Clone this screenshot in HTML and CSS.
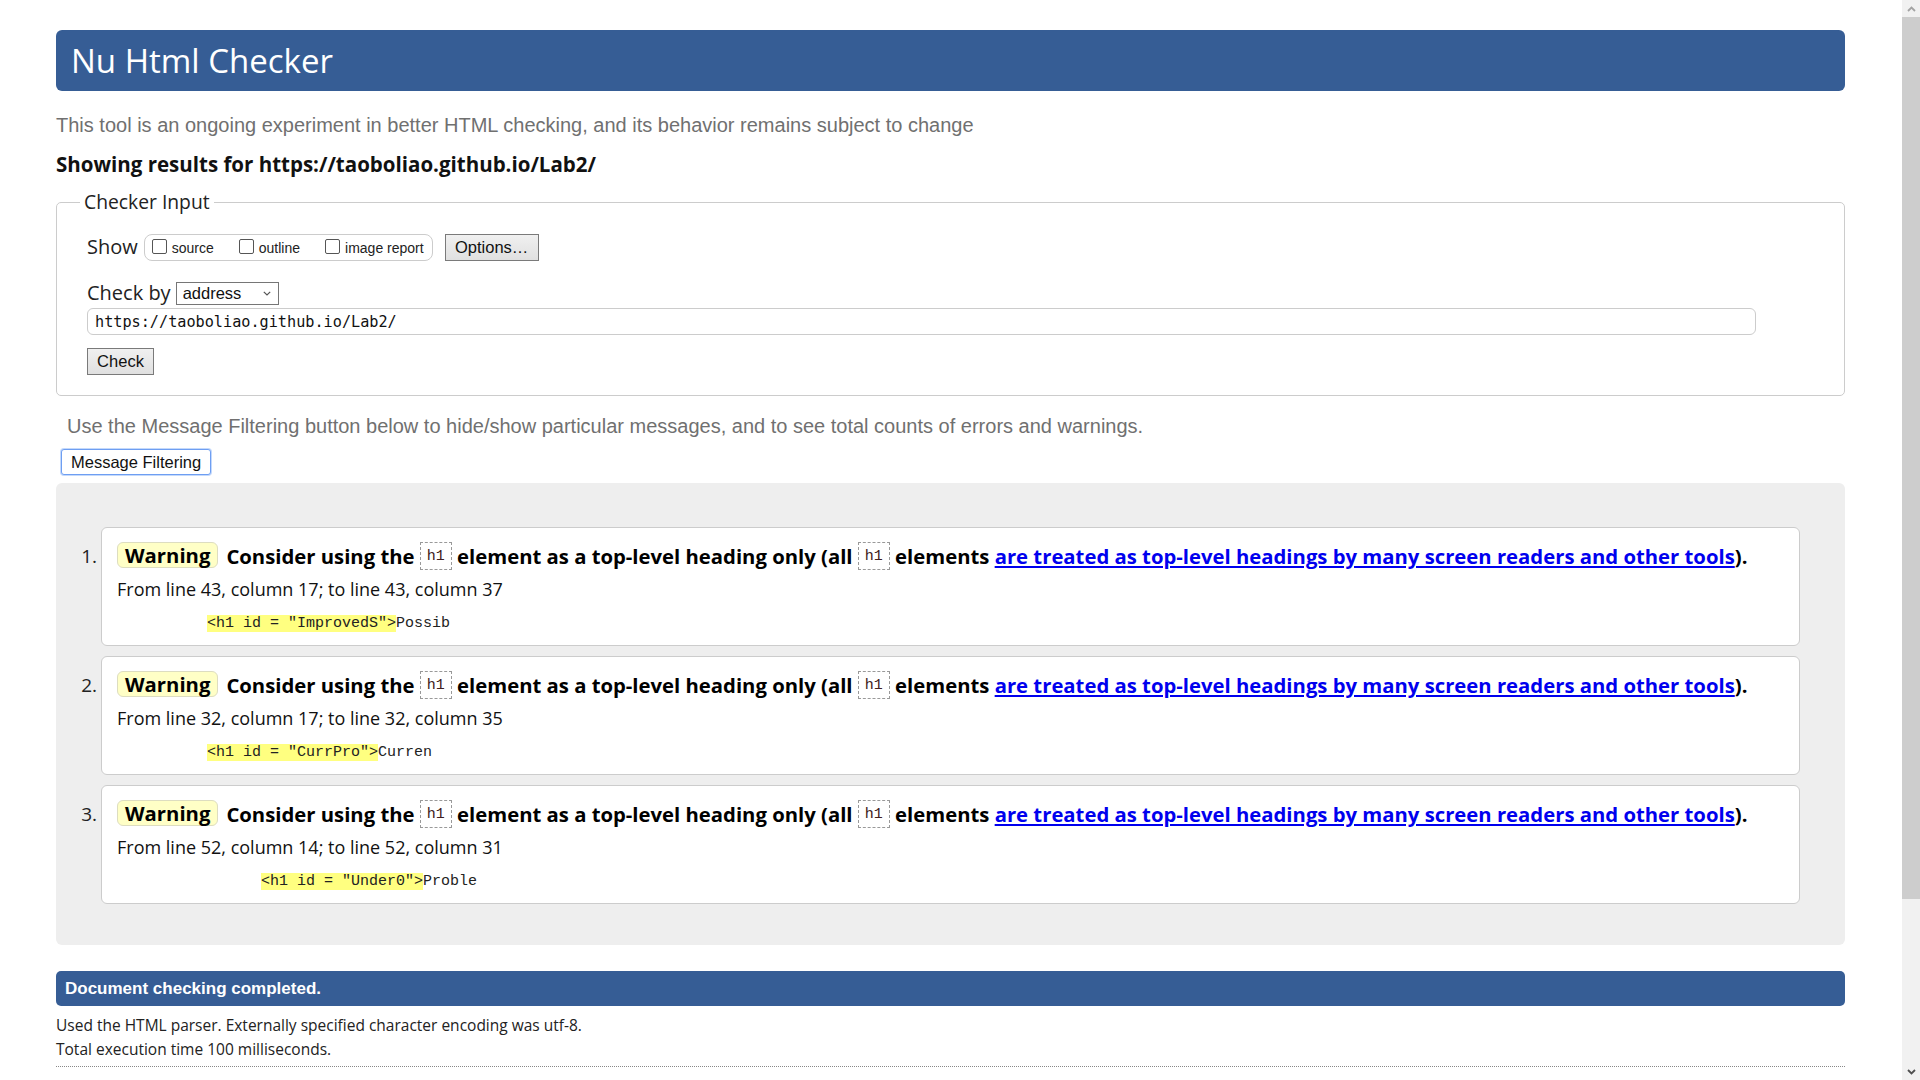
FILE: index.html
```html
<!DOCTYPE html>
<html lang="en">
<head>
<meta charset="utf-8">
<title>Showing results for https://taoboliao.github.io/Lab2/ - Nu Html Checker</title>
<link rel="stylesheet" href="styles.css">
</head>
<body>
<main class="page">
  <h1 class="title">Nu Html Checker</h1>
  <p class="intro">This tool is an ongoing experiment in better HTML checking, and its behavior remains subject to change</p>
  <h2 class="results-for">Showing results for https://taoboliao.github.io/Lab2/</h2>

  <fieldset class="checker">
    <legend>Checker Input</legend>
    <div class="show-row">
      <span class="show-label">Show</span>
      <span class="opts">
        <span class="opt"><span class="box"></span>source</span>
        <span class="opt"><span class="box"></span>outline</span>
        <span class="opt"><span class="box"></span>image report</span>
      </span>
      <span class="btn options">Options…</span>
    </div>
    <div class="checkby-row">
      <span class="checkby-label">Check by</span>
      <span class="select">address<svg class="chev" width="8" height="5" viewBox="0 0 8 5"><path d="M0.8 0.8 L4 4 L7.2 0.8" fill="none" stroke="#555" stroke-width="1.2"/></svg></span>
    </div>
    <div class="url">https://taoboliao.github.io/Lab2/</div>
    <span class="btn check">Check</span>
  </fieldset>

  <p class="filter-note">Use the Message Filtering button below to hide/show particular messages, and to see total counts of errors and warnings.</p>
  <span class="filter-btn">Message Filtering</span>

  <div class="results">
    <ol class="messages">
      <li class="msg">
        <span class="num">1.</span>
        <div class="card">
          <p class="message"><span class="badge">Warning</span><strong>Consider using the <code class="el">h1</code> element as a top-level heading only (all <code class="el">h1</code> elements <a href="#">are treated as top-level headings by many screen readers and other tools</a>).</strong></p>
          <p class="location">From line 43, column 17; to line 43, column 37</p>
          <p class="extract"><code>          <b>&lt;h1 id = ″ImprovedS″&gt;</b>Possib</code></p>
        </div>
      </li>
      <li class="msg">
        <span class="num">2.</span>
        <div class="card">
          <p class="message"><span class="badge">Warning</span><strong>Consider using the <code class="el">h1</code> element as a top-level heading only (all <code class="el">h1</code> elements <a href="#">are treated as top-level headings by many screen readers and other tools</a>).</strong></p>
          <p class="location">From line 32, column 17; to line 32, column 35</p>
          <p class="extract"><code>          <b>&lt;h1 id = ″CurrPro″&gt;</b>Curren</code></p>
        </div>
      </li>
      <li class="msg">
        <span class="num">3.</span>
        <div class="card">
          <p class="message"><span class="badge">Warning</span><strong>Consider using the <code class="el">h1</code> element as a top-level heading only (all <code class="el">h1</code> elements <a href="#">are treated as top-level headings by many screen readers and other tools</a>).</strong></p>
          <p class="location">From line 52, column 14; to line 52, column 31</p>
          <p class="extract"><code>                <b>&lt;h1 id = ″Under0″&gt;</b>Proble</code></p>
        </div>
      </li>
    </ol>
  </div>

  <p class="done">Document checking completed.</p>
  <p class="meta">Used the HTML parser. Externally specified character encoding was utf-8.<br>Total execution time 100 milliseconds.</p>
  <div class="rule"></div>
</main>

<div class="scrollbar" aria-hidden="true">
  <div class="sb-btn"><svg width="9" height="6" viewBox="0 0 9 6"><path d="M1 5 L4.5 1.5 L8 5" fill="none" stroke="#a3a3a3" stroke-width="1.8"/></svg></div>
  <div class="sb-thumb"></div>
  <div class="sb-rest"></div>
  <div class="sb-btn"><svg width="9" height="6" viewBox="0 0 9 6"><path d="M1 1 L4.5 4.5 L8 1" fill="none" stroke="#505050" stroke-width="1.8"/></svg></div>
</div>
</body>
</html>
```

FILE: styles.css
```css
html, body {
  margin: 0;
  height: 100%;
}

body {
  display: grid;
  grid-template-columns: 1fr 18px;
  overflow: hidden;
  background: #fff;
  color: #000;
  font-family: "Open Sans", "Liberation Sans", sans-serif;
}

.page {
  min-width: 0;
  overflow: hidden;
  padding: 30px 57px 0 56px;
}

.title {
  margin: 0;
  height: 61px;
  padding-left: 15px;
  background: #365d95;
  color: #fff;
  border-radius: 6px;
  font-size: 33px;
  font-weight: 400;
  line-height: 61px;
}

.intro {
  margin: 22px 0 0;
  font-family: "Liberation Sans", Arial, sans-serif;
  font-size: 20px;
  line-height: 24px;
  color: #707070;
}

.results-for {
  margin: 13px 0 0;
  font-size: 20.5px;
  font-weight: 700;
  line-height: 28px;
  color: #111;
}

/* Checker input */
.checker {
  margin: 12px 0 0;
  padding: 20px 30px 20px 30px;
  border: 1px solid #ccc;
  border-radius: 5px;
}

.checker legend {
  margin-left: -7px;
  padding: 0 4px;
  font-size: 19.3px;
  line-height: 24px;
  color: #222;
}

.show-row {
  display: flex;
  align-items: center;
  height: 27px;
}

.show-label,
.checkby-label {
  font-size: 20px;
  color: #222;
}

.show-label {
  margin-right: 6px;
  margin-top: -3px;
}

.checkby-label {
  margin-top: -2px;
}

.opts {
  display: flex;
  align-items: center;
  height: 27px;
  box-sizing: border-box;
  padding: 0 8px 0 7px;
  border: 1px solid #ccc;
  border-radius: 8px;
}

.opt {
  display: flex;
  align-items: center;
  margin-right: 25px;
  font-family: "Liberation Sans", Arial, sans-serif;
  font-size: 14px;
  color: #222;
}

.opt:last-child {
  margin-right: 0;
}

.box {
  width: 13px;
  height: 13px;
  margin: -3px 5px 0 0;
  border: 1px solid #555;
  border-radius: 2px;
  background: #fff;
}

.btn {
  display: inline-flex;
  align-items: center;
  justify-content: center;
  box-sizing: border-box;
  height: 27px;
  border: 1px solid #7a7a7a;
  background: linear-gradient(#f0f0f0, #e0e0e0);
  font-family: "Liberation Sans", Arial, sans-serif;
  font-size: 16.5px;
  color: #111;
}

.options {
  width: 94px;
  margin-left: 12px;
}

.checkby-row {
  display: flex;
  align-items: center;
  margin-top: 21px;
  height: 22px;
}

.select {
  display: flex;
  align-items: center;
  justify-content: space-between;
  box-sizing: border-box;
  width: 103px;
  height: 23px;
  margin-left: 5px;
  padding: 0 7px 0 6px;
  border: 1px solid #767676;
  font-family: "Liberation Sans", Arial, sans-serif;
  font-size: 16.5px;
  color: #111;
}

.url {
  box-sizing: border-box;
  height: 27px;
  margin: 4px 58px 0 0;
  padding: 2px 0 0 7px;
  border: 1px solid #ccc;
  border-radius: 6px;
  font-family: "DejaVu Sans Mono", monospace;
  font-size: 15.2px;
  line-height: 22px;
  color: #111;
}

.check {
  width: 67px;
  height: 27px;
  margin-top: 13px;
}

/* filter */
.filter-note {
  margin: 18px 0 0;
  padding-left: 11px;
  font-family: "Liberation Sans", Arial, sans-serif;
  font-size: 20px;
  line-height: 24px;
  color: #707070;
}

.filter-btn {
  display: inline-flex;
  align-items: center;
  box-sizing: border-box;
  width: 150px;
  height: 26px;
  margin: 11px 0 0 5px;
  padding-left: 9px;
  border: 1px solid #6e9ef2;
  border-radius: 3px;
  box-shadow: 0 0 0 1px #c4d9fb;
  background: #fff;
  font-family: "Liberation Sans", Arial, sans-serif;
  font-size: 16.5px;
  color: #111;
}

/* results */
.results {
  margin-top: 8px;
  padding: 44px 45px 41px 0;
  background: #eee;
  border-radius: 6px;
}

.messages {
  margin: 0;
  padding: 0;
  list-style: none;
  display: flex;
  flex-direction: column;
  gap: 10px;
}

.msg {
  display: flex;
}

.num {
  box-sizing: border-box;
  width: 45px;
  padding: 15px 4px 0 0;
  text-align: right;
  font-size: 19px;
  line-height: 28px;
  color: #222;
}

.card {
  flex: 1;
  padding: 14px 15px 14px 15px;
  background: #fff;
  border: 1px solid #ccc;
  border-radius: 6px;
}

.message {
  margin: 0;
  height: 28px;
  font-size: 20.3px;
  line-height: 28px;
  white-space: nowrap;
}

.badge {
  display: inline-block;
  box-sizing: border-box;
  height: 26px;
  margin-right: 8px;
  padding: 0 7px;
  background: #ffffc6;
  border: 1px solid #ddddc0;
  border-radius: 6px;
  font-weight: 700;
  line-height: 24px;
  vertical-align: top;
}

.message strong {
  font-weight: 700;
}

.el {
  display: inline-block;
  box-sizing: border-box;
  height: 28px;
  padding: 2px 6px 0;
  border: 1px dashed #999;
  font-family: "Liberation Mono", monospace;
  font-size: 15px;
  font-weight: 400;
  line-height: 24px;
  color: #402020;
  vertical-align: top;
}

.message a {
  color: #0000ee;
  text-decoration: underline;
}

.location {
  margin: 7px 0 0;
  font-size: 18px;
  line-height: 24px;
  color: #111;
}

.extract {
  margin: 10px 0 0;
  height: 20px;
  line-height: 20px;
}

.extract code {
  white-space: pre;
  font-family: "Liberation Mono", monospace;
  font-size: 15px;
  color: #222;
}

.extract b {
  font-weight: 400;
  background: #ffff80;
}

/* footer */
.done {
  margin: 26px 0 0;
  height: 35px;
  padding-left: 9px;
  background: #365d95;
  border-radius: 5px;
  font-family: "Liberation Sans", Arial, sans-serif;
  font-size: 17px;
  font-weight: 700;
  line-height: 35px;
  color: #fff;
}

.meta {
  margin: 7px 0 0;
  font-size: 15.5px;
  line-height: 24px;
  color: #222;
}

.rule {
  margin-top: 5px;
  border-bottom: 1px dotted #888;
}

/* scrollbar */
.scrollbar {
  display: flex;
  flex-direction: column;
  height: 100vh;
  background: #f1f1f1;
}

.sb-btn {
  display: flex;
  align-items: center;
  justify-content: center;
  height: 17px;
}

.sb-thumb {
  height: 882px;
  background: #cdcdcd;
}

.sb-rest {
  flex: 1;
}
```
